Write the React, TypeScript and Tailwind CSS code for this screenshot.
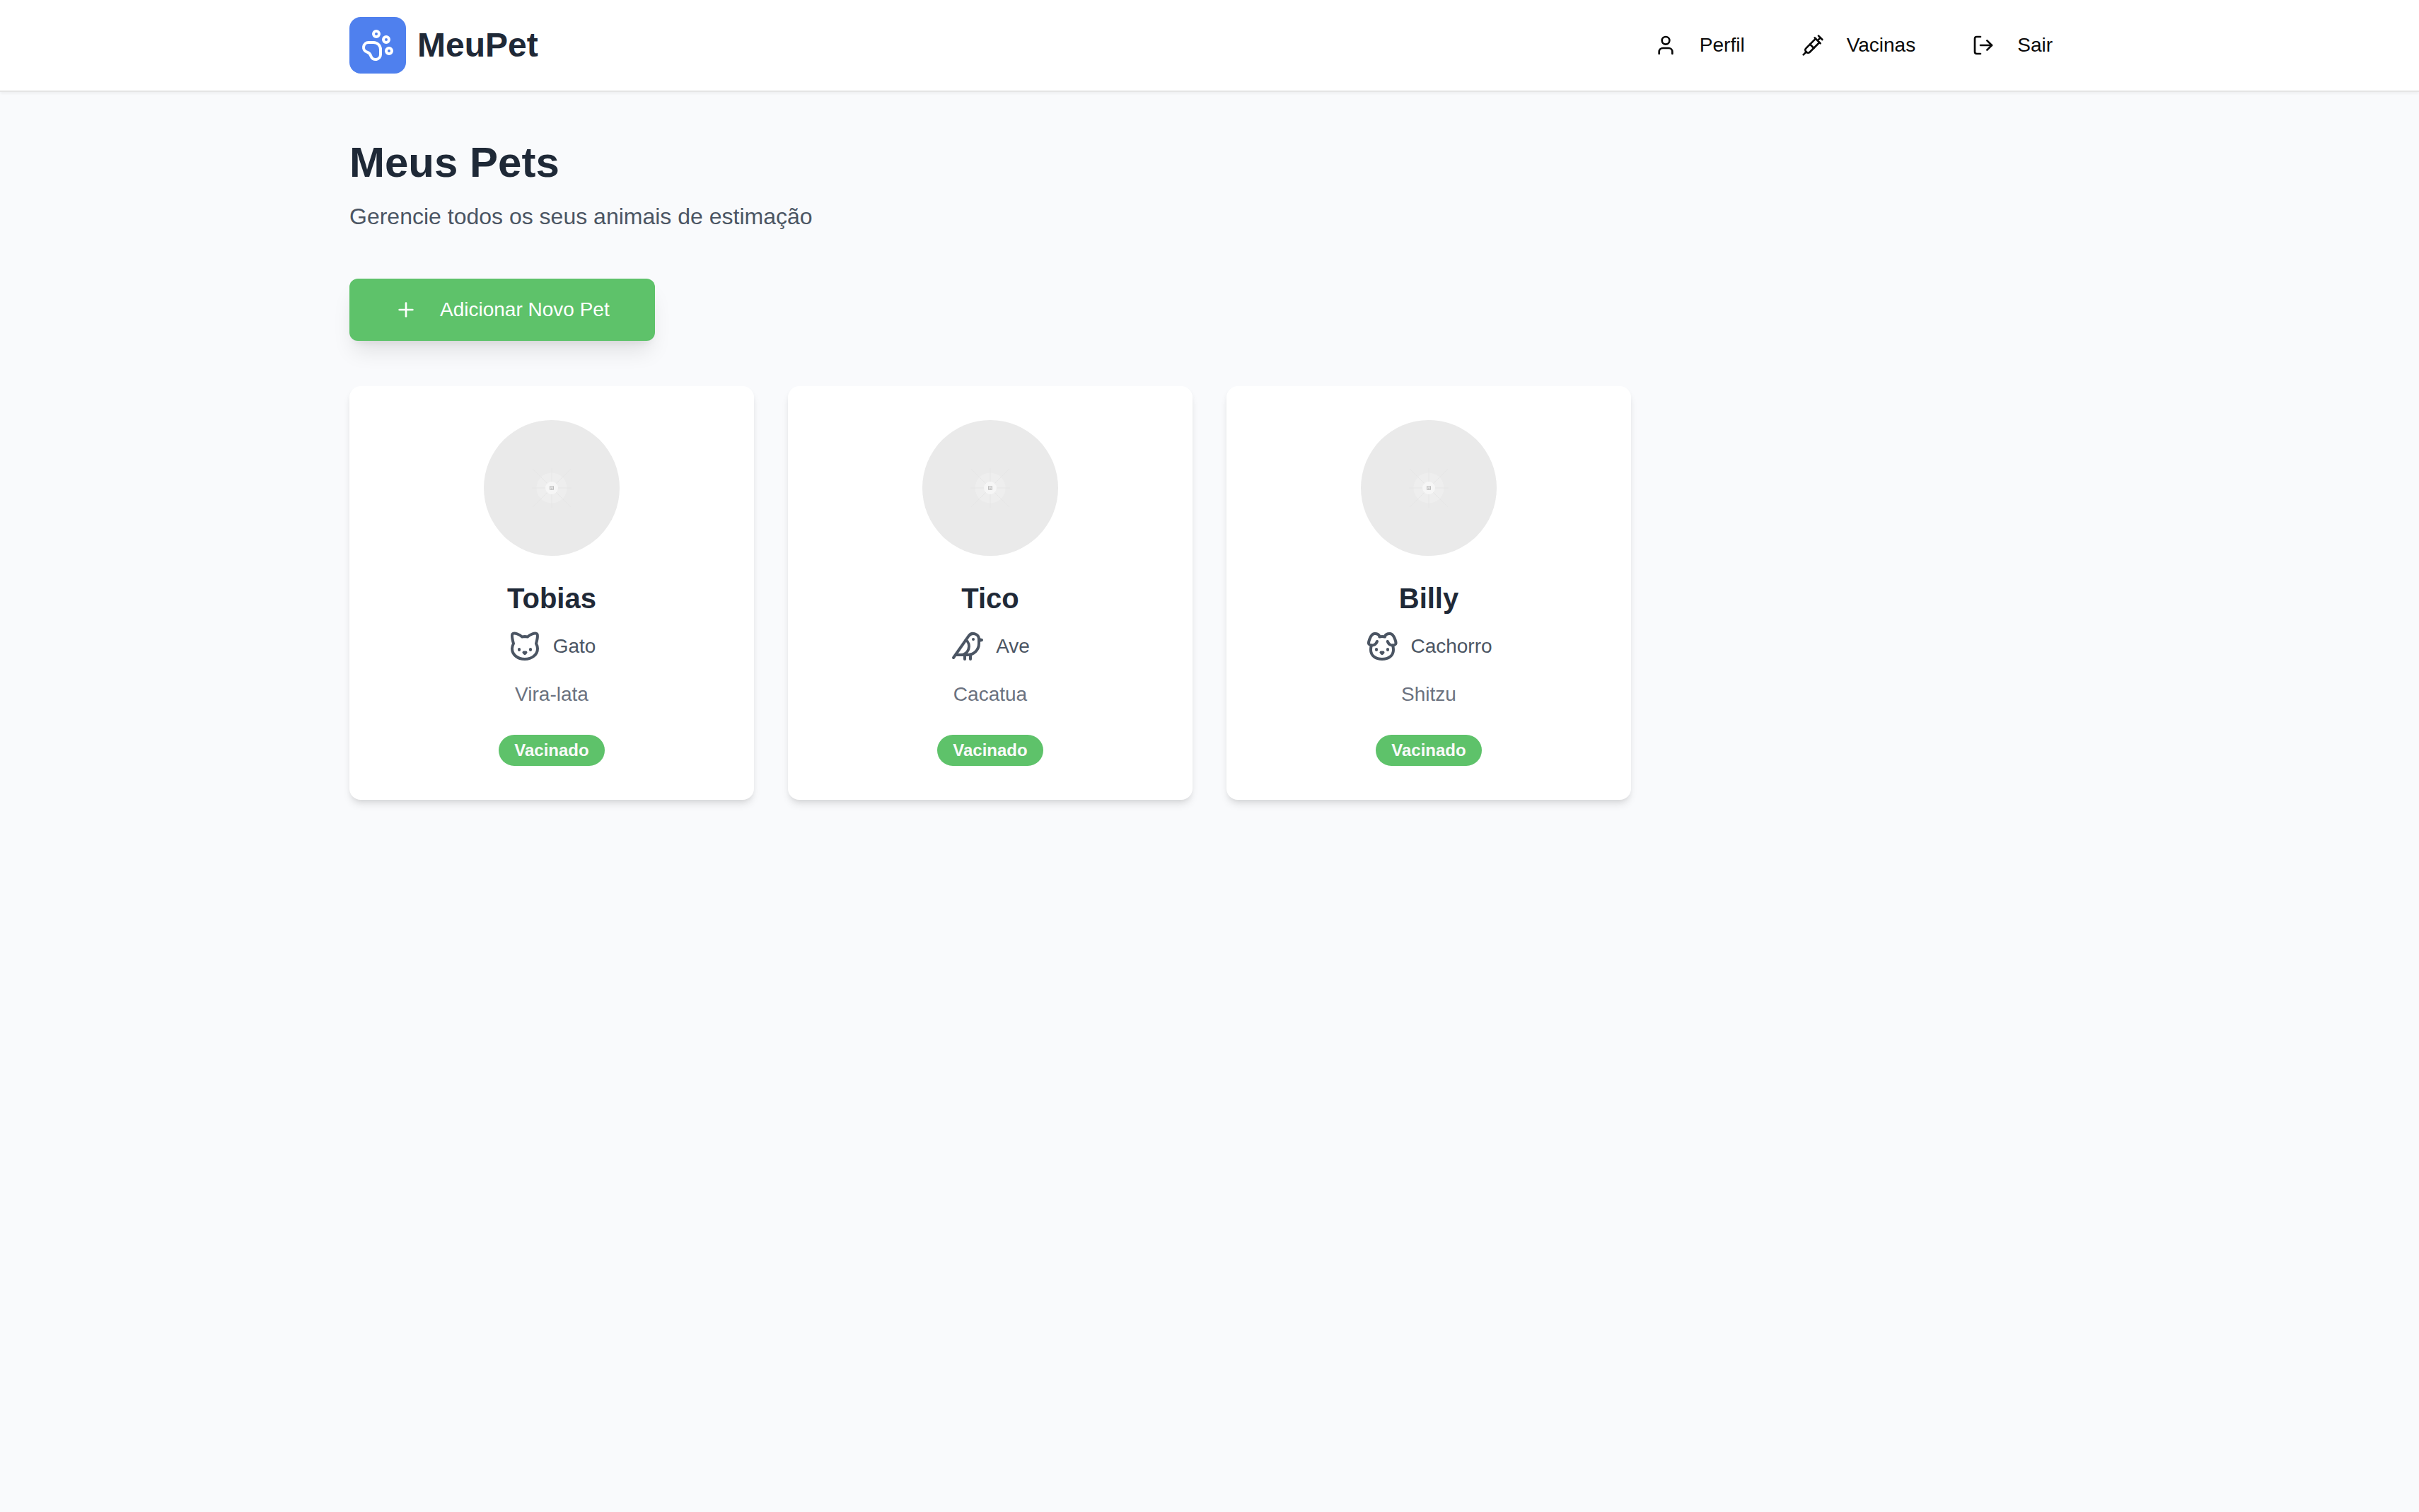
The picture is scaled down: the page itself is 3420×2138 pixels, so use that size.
import React from "react";
import { Bird, Cat, Dog, LogOut, PawPrint, Plus, Syringe, User } from "lucide-react";
import type { LucideIcon } from "lucide-react";

type Pet = { name: string; species: string; breed: string; icon: LucideIcon };

const pets: Pet[] = [
  { name: "Tobias", species: "Gato", breed: "Vira-lata", icon: Cat },
  { name: "Tico", species: "Ave", breed: "Cacatua", icon: Bird },
  { name: "Billy", species: "Cachorro", breed: "Shitzu", icon: Dog },
];

const links: { label: string; icon: LucideIcon }[] = [
  { label: "Perfil", icon: User },
  { label: "Vacinas", icon: Syringe },
];

const navItem = "flex h-[72px] items-center gap-8 rounded-xl px-6 text-[28px] leading-10 text-[#0a0a0a]";

function Header() {
  return (
    <header className="border-b-2 border-[#e5e5e5] bg-white shadow-[0_2px_4px_0_rgba(0,0,0,0.05)]">
      <div className="mx-auto flex h-32 max-w-[2560px] items-center justify-between px-16">
        <a href="#" className="flex items-center gap-4">
          <span className="flex size-20 items-center justify-center rounded-2xl bg-[#4f80ee]">
            <PawPrint className="size-12 text-white" />
          </span>
          <span className="text-[48px] leading-[64px] font-bold text-[#1f2937]">MeuPet</span>
        </a>
        <nav className="flex items-center gap-8">
          {links.map(({ label, icon: Icon }) => (
            <a key={label} href="#" className={navItem}>
              <Icon className="size-8" />
              {label}
            </a>
          ))}
          <button type="button" className={navItem}>
            <LogOut className="size-8" />
            Sair
          </button>
        </nav>
      </div>
    </header>
  );
}

function PhotoPlaceholder() {
  return (
    <svg viewBox="0 0 192 192" className="size-48 rounded-full" aria-hidden="true">
      <rect width="192" height="192" fill="#eaeaea" />
      <circle cx="96" cy="96" r="21.5" fill="#eeeeee" />
      <path d="M96 68v56M68 96h56M69 69l54 54M123 69l-54 54" stroke="#e6e6e6" strokeWidth="1" />
      <circle cx="96" cy="96" r="9" fill="#f6f6f6" />
      <path d="M93.5 93.5h5v5h-5zM93.5 96h5M96 96v2" fill="none" stroke="#bdbdbd" strokeWidth="1" />
    </svg>
  );
}

function PetCard({ name, species, breed, icon: Icon }: Pet) {
  return (
    <article className="flex flex-col items-center rounded-2xl bg-white p-12 shadow-[0_8px_12px_-2px_rgba(0,0,0,0.1),0_4px_8px_-4px_rgba(0,0,0,0.1)]">
      <PhotoPlaceholder />
      <h2 className="mt-8 text-[40px] leading-[56px] font-bold text-[#1f2937]">{name}</h2>
      <p className="mt-4 flex items-center gap-4 text-[28px] leading-10 text-[#4b5563]">
        <Icon className="size-12" />
        {species}
      </p>
      <p className="mt-6 text-[28px] leading-10 text-[#6b7280]">{breed}</p>
      <span className="mt-[37px] rounded-full bg-[#5ec26a] px-[22px] py-1.5 text-2xl leading-8 font-bold text-[#fafafa]">
        Vacinado
      </span>
    </article>
  );
}

export default function App() {
  return (
    <div className="min-h-screen bg-[#f9fafc] font-['Liberation_Sans',Arial,sans-serif]">
      <Header />
      <main className="mx-auto max-w-[2560px] px-16 py-16">
        <h1 className="text-[60px] leading-[72px] font-bold text-[#1f2937]">Meus Pets</h1>
        <p className="mt-4 text-[32px] leading-[48px] text-[#4b5563]">
          Gerencie todos os seus animais de estimação
        </p>
        <button
          type="button"
          className="mt-16 flex h-[88px] items-center gap-8 rounded-xl bg-[#5ec26a] px-16 text-[28px] leading-10 text-white shadow-[0_20px_30px_-6px_rgba(0,0,0,0.1),0_8px_12px_-8px_rgba(0,0,0,0.1)]"
        >
          <Plus className="size-8" />
          Adicionar Novo Pet
        </button>
        <section className="mt-16 grid grid-cols-4 gap-12">
          {pets.map((pet) => (
            <PetCard key={pet.name} {...pet} />
          ))}
        </section>
      </main>
    </div>
  );
}
